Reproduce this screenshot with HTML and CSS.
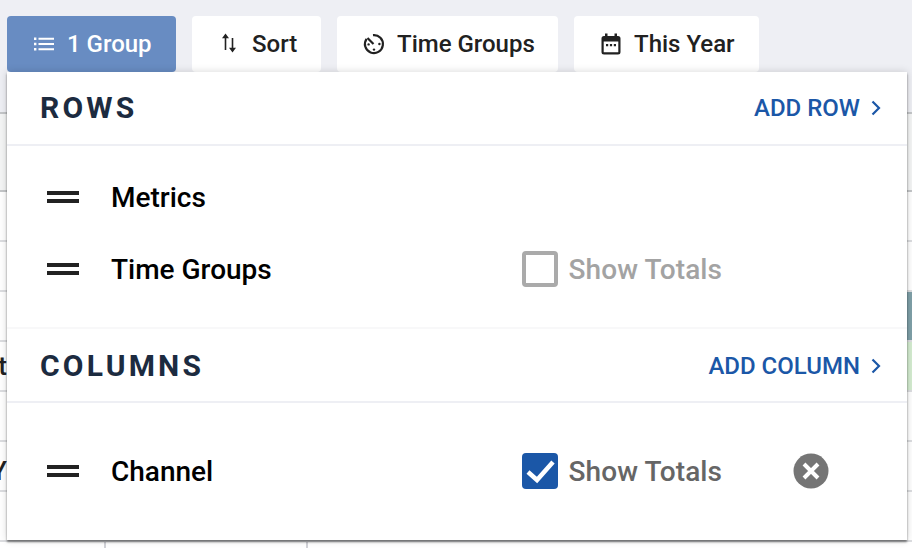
FILE: index.html
```html
<!DOCTYPE html>
<html lang="en">
<head>
<meta charset="utf-8">
<title>Group</title>
<link rel="stylesheet" href="styles.css">
</head>
<body>
<div class="page">
  <div class="toolbar">
    <button class="tool tool-active">
      <svg class="tool-icon" viewBox="0 0 24 24"><path fill="currentColor" d="M2 5.500h2.400v2.400H2zM2 10.800h2.400v2.400H2zM2 16.100h2.400v2.400H2zM6.500 5.700H22v2H6.500zM6.500 11H22v2H6.500zM6.500 16.300H22v2H6.500z"/></svg>
      <span>1 Group</span>
    </button>
    <button class="tool">
      <svg class="tool-icon" viewBox="0 0 24 24"><path fill="currentColor" d="M8.500 1.500 5 6.300h2.700V18h1.600V6.300H12zM15.500 20.500 19 15.700h-2.700V6h-1.600v9.700H12z"/></svg>
      <span>Sort</span>
    </button>
    <button class="tool">
      <svg class="tool-icon" viewBox="0 0 24 24"><path fill="none" stroke="currentColor" stroke-width="2.200" d="M11 3.100A9 9 0 1 1 4.600 6.800"/><path fill="none" stroke="currentColor" stroke-width="2.200" d="M5.500 6 11.500 12"/><circle cx="12" cy="17.600" r="1.200" fill="currentColor"/><circle cx="17.400" cy="12" r="1.200" fill="currentColor"/><circle cx="6.600" cy="12.400" r="1.200" fill="currentColor"/></svg>
      <span>Time Groups</span>
    </button>
    <button class="tool">
      <svg class="tool-icon" viewBox="0 0 24 24"><path fill="currentColor" d="M6 1.500h2.500V4h7V1.500H18V4h1a2.500 2.500 0 0 1 2.500 2.500V20a2.500 2.500 0 0 1-2.500 2.500H5A2.500 2.500 0 0 1 2.500 20V6.500A2.500 2.500 0 0 1 5 4h1zM4.700 9.500V20.300h14.600V9.500z"/><path fill="currentColor" d="M7 12h2.200v2.200H7zM10.900 12h2.200v2.200h-2.200zM14.800 12H17v2.200h-2.200z"/></svg>
      <span>This Year</span>
    </button>
  </div>

  <div class="table">
    <div class="table-head"></div>
    <div class="table-sub"></div>
    <div class="table-row"></div>
    <div class="table-row"></div>
    <div class="table-row tint-teal"></div>
    <div class="table-row tint-green"><span class="cut-label">Budget</span></div>
    <div class="table-row"></div>
    <div class="table-row"><span class="cut-label cut-low">LY</span></div>
    <div class="table-row"></div>
    <div class="table-row table-row-cols"><i class="col col-a"></i><i class="col col-b"></i></div>
  </div>

  <div class="panel">
    <section class="section">
      <header class="section-head">
        <h2 class="section-title">ROWS</h2>
        <a class="add-link">ADD ROW
          <svg class="chevron" viewBox="0 0 10 16"><path fill="none" stroke="currentColor" stroke-width="2.200" d="M1.500 1.500 8 8l-6.500 6.500"/></svg>
        </a>
      </header>
      <div class="section-list list-rows">
        <div class="item">
          <span class="drag"></span>
          <span class="item-label">Metrics</span>
        </div>
        <div class="item">
          <span class="drag"></span>
          <span class="item-label">Time Groups</span>
          <span class="totals totals-off"><span class="box"></span><span>Show Totals</span></span>
        </div>
      </div>
    </section>
    <section class="section section-cols">
      <header class="section-head">
        <h2 class="section-title">COLUMNS</h2>
        <a class="add-link">ADD COLUMN
          <svg class="chevron" viewBox="0 0 10 16"><path fill="none" stroke="currentColor" stroke-width="2.200" d="M1.500 1.500 8 8l-6.500 6.500"/></svg>
        </a>
      </header>
      <div class="section-list list-cols">
        <div class="item">
          <span class="drag"></span>
          <span class="item-label">Channel</span>
          <span class="totals totals-on">
            <span class="box box-on"><svg viewBox="0 0 36 36"><path fill="none" stroke="#fff" stroke-width="4.500" d="M6 19l9 8L31 9"/></svg></span>
            <span>Show Totals</span>
          </span>
          <svg class="remove" viewBox="0 0 36 36"><circle cx="18" cy="18" r="17.500" fill="#757575"/><path stroke="#fff" stroke-width="4" d="M11 11l14 14M25 11 11 25"/></svg>
        </div>
      </div>
    </section>
  </div>
</div>
</body>
</html>
```
FILE: styles.css
```css
* { box-sizing: border-box; }
html, body { margin: 0; padding: 0; }
body {
  width: 912px;
  height: 548px;
  overflow: hidden;
  background: #fff;
  font-family: Roboto, "Liberation Sans", sans-serif;
}
.page { position: relative; width: 912px; height: 548px; overflow: hidden; }

.toolbar {
  height: 72px;
  padding: 16px 7px 0;
  display: flex;
  gap: 16px;
  background: #eeeff4;
}
.tool {
  height: 56px;
  border: 0;
  border-radius: 4px;
  padding: 0;
  display: flex;
  align-items: center;
  background: #fff;
  color: #212121;
  font-family: inherit;
  font-size: 24px;
  font-weight: 500;
  white-space: nowrap;
  gap: 11px;
}
.tool:nth-child(1) { width: 169px; padding-left: 25px; }
.tool:nth-child(2) { width: 129px; padding-left: 25px; }
.tool:nth-child(3) { width: 221px; padding-left: 25px; }
.tool:nth-child(4) { width: 185px; padding-left: 25px; }
.tool-active { background: #688cc2; color: #fff; }
.tool-icon { width: 24px; height: 24px; flex: none; }

.table { background: #fff; }
.table-head { height: 42px; background: #eeeff4; border-bottom: 2px solid #c4c6c8; }
.table-sub { height: 78px; background: #f4f5f5; border-bottom: 2px solid #c4c6c8; }
.table-row {
  position: relative;
  height: 50px;
  border-bottom: 2px solid #dcdde0;
  display: flex;
  align-items: center;
  color: #212121;
  font-size: 26px;
  font-weight: 500;
  white-space: nowrap;
}
.tint-teal { background: linear-gradient(to left, #7fa0a8 5px, #fff 5px); }
.tint-green { background: linear-gradient(to left, #d4ecd0 5px, #fff 5px); }
.cut-label { position: absolute; right: 905px; }
.cut-low { top: 14px; }
.table-row-cols { height: 20px; border-bottom: 0; }
.col { position: absolute; top: 0; bottom: 0; width: 2px; background: #d2d3d8; }
.col-a { left: 104px; }
.col-b { left: 306px; }

.panel {
  position: absolute;
  left: 7px;
  top: 72px;
  width: 900px;
  height: 468px;
  background: #fff;
  box-shadow: 0 2px 2px rgba(0, 0, 0, .45), 0 0 8px rgba(0, 0, 0, .16);
}
.section-head {
  height: 74px;
  padding: 0 26px 0 33px;
  display: flex;
  align-items: center;
  justify-content: space-between;
  border-bottom: 2px solid #eeeff4;
}
.section-title {
  margin: 0 0 2px;
  font-size: 30px;
  font-weight: 700;
  letter-spacing: 3.200px;
  color: #1c2b40;
}
.add-link {
  display: flex;
  align-items: center;
  gap: 11px;
  font-size: 24px;
  font-weight: 500;
  color: #1b57a7;
}
.chevron { width: 10px; height: 16px; }
.section-list { padding: 15px 0 24px; }
.list-rows { height: 183px; border-bottom: 2px solid #f8f8f9; }
.list-cols { padding: 32px 0 0; height: 136px; }
.section-cols .section-head { padding-top: 2px; }

.item {
  position: relative;
  height: 72px;
  display: flex;
  align-items: center;
  font-size: 28px;
  font-weight: 500;
  color: #000;
}
.drag {
  width: 32px;
  height: 12px;
  margin-left: 40px;
  margin-right: 32px;
  border-top: 4px solid #222;
  border-bottom: 4px solid #222;
}
.item-label { flex: none; }
.totals {
  position: absolute;
  left: 515px;
  top: 0;
  bottom: 0;
  display: flex;
  align-items: center;
  gap: 10.500px;
  letter-spacing: .1px;
}
.totals-off { color: #a3a3a3; }
.totals-on { color: #666; }
.box {
  width: 36px;
  height: 36px;
  border: 4px solid #aaa;
  border-radius: 4px;
  flex: none;
}
.box-on { border: 0; background: #1b57a7; }
.box-on svg { display: block; width: 36px; height: 36px; }
.remove { position: absolute; left: 786px; top: 18px; width: 36px; height: 36px; }
```
